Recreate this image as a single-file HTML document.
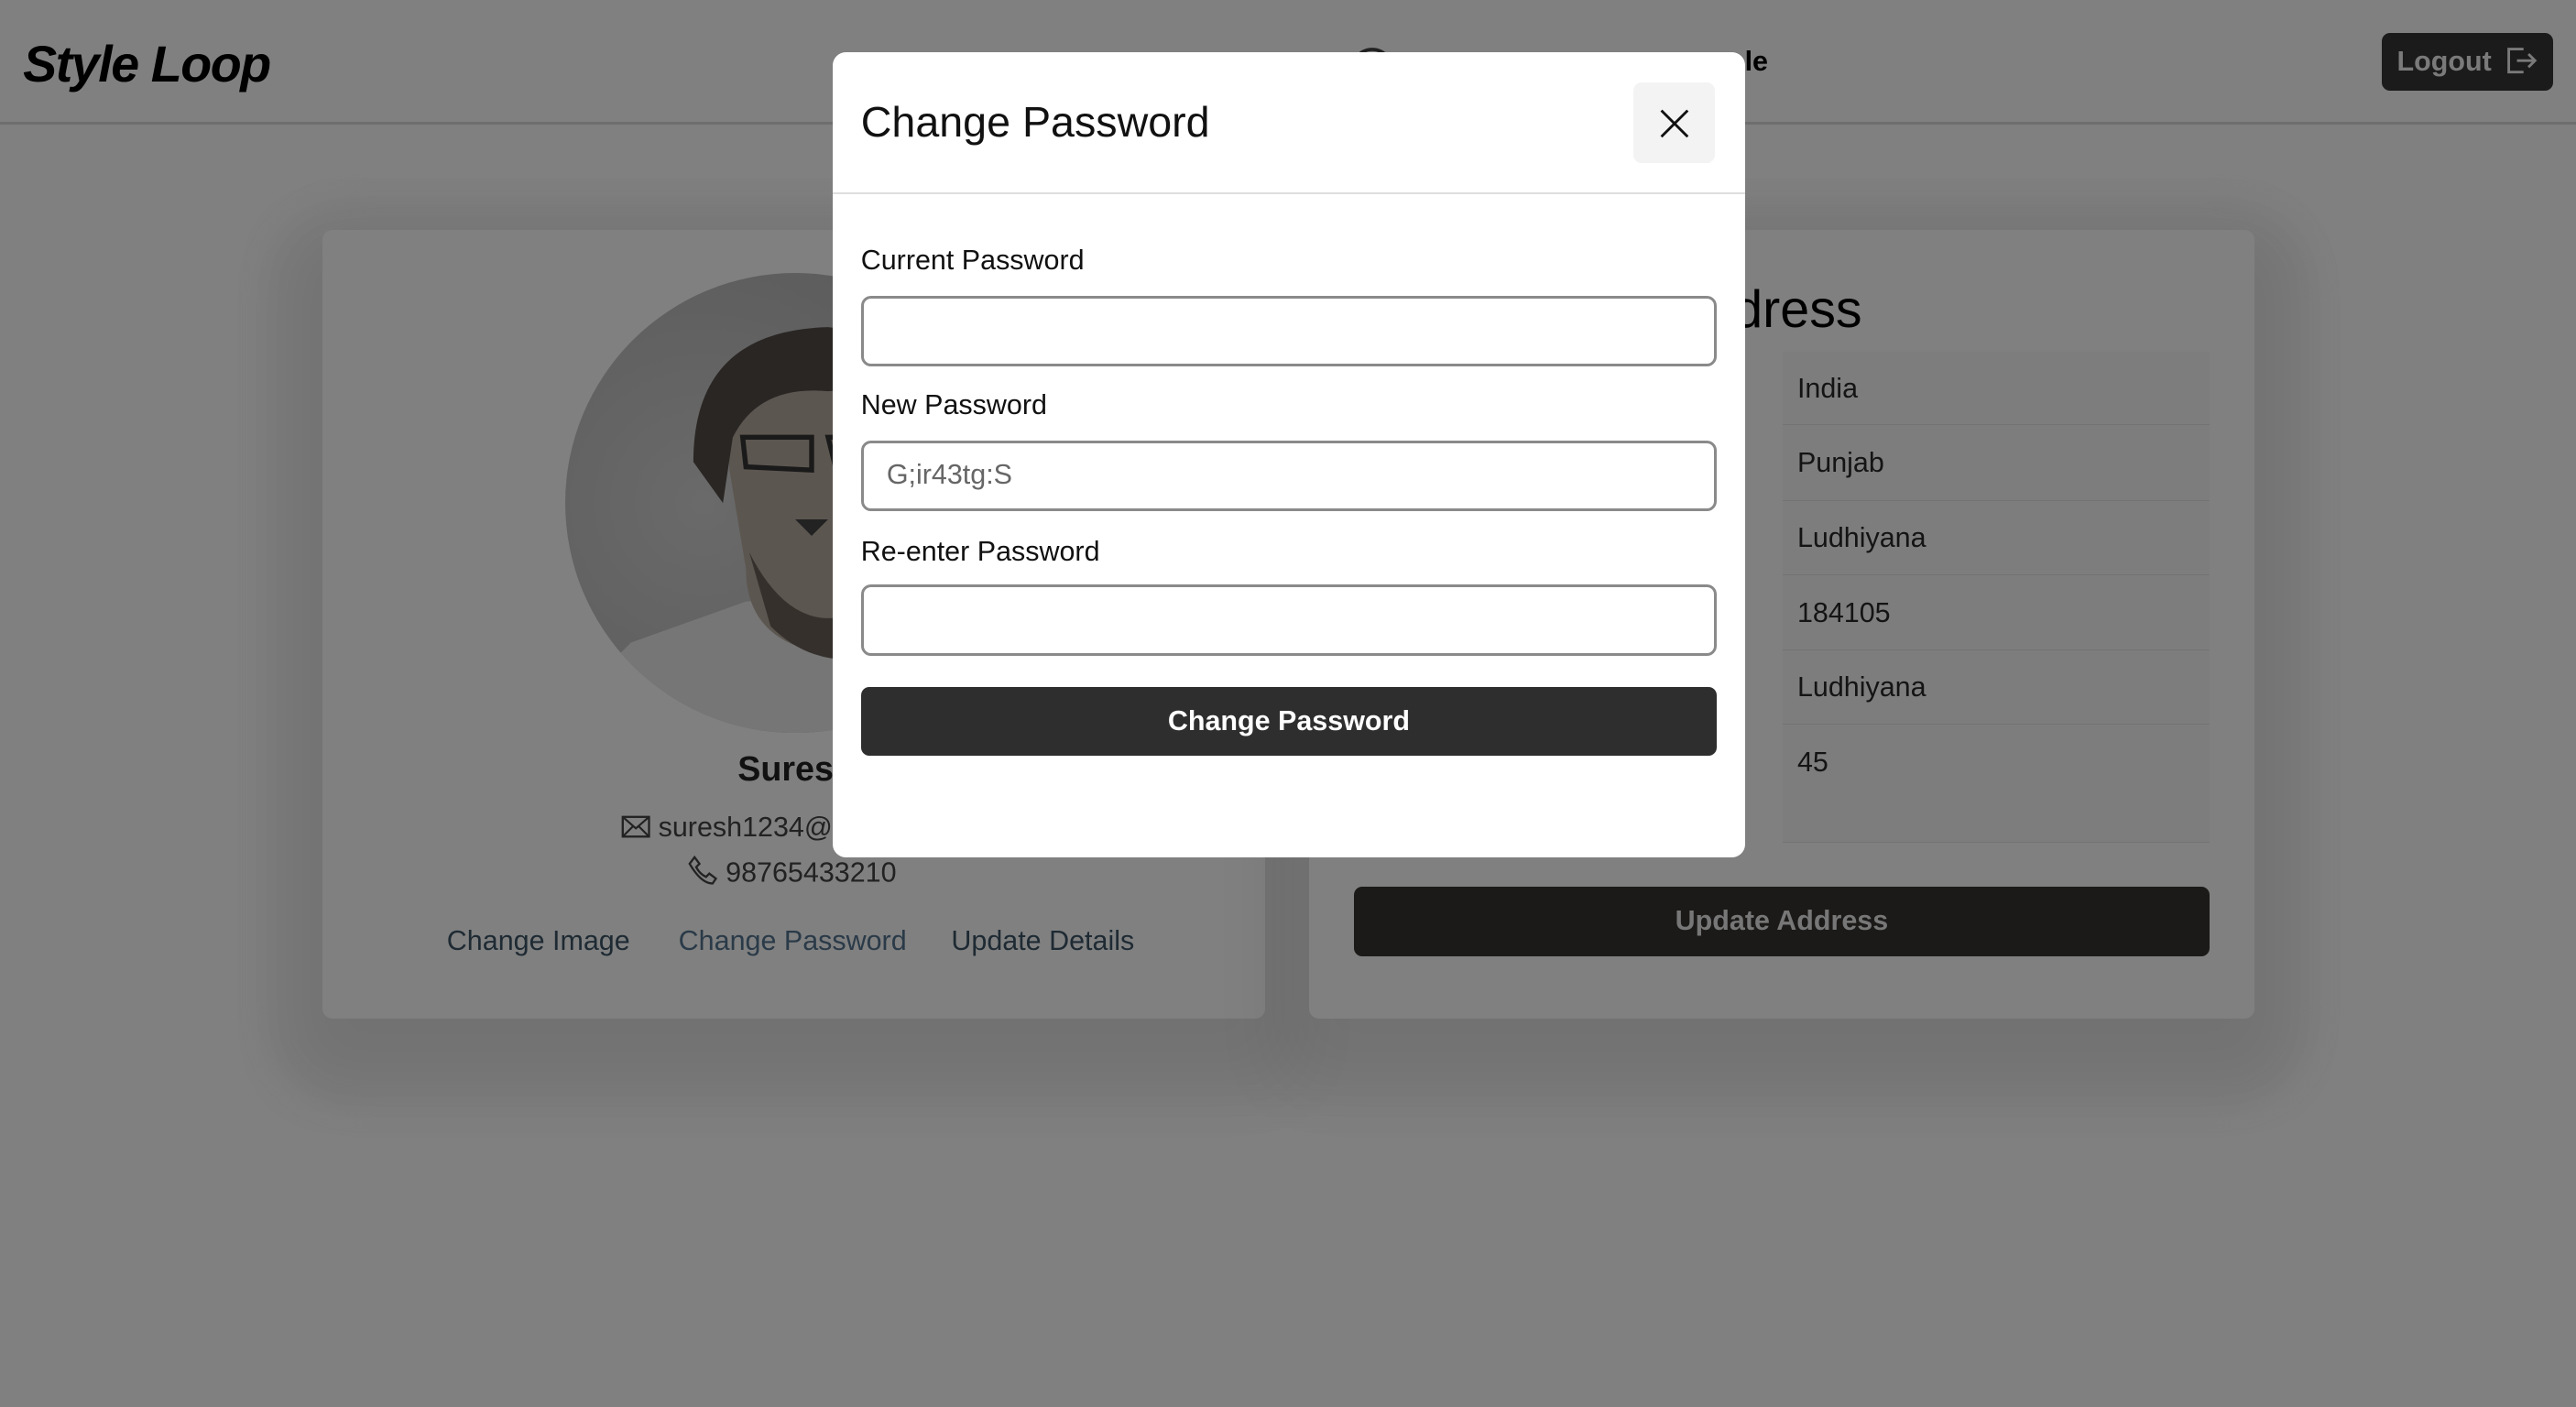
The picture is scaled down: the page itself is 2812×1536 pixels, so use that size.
<!DOCTYPE html>
<html><head><meta charset="utf-8">
<style>
html,body{margin:0;padding:0}
body{width:1568px;height:856px;zoom:1.7934;position:relative;overflow:hidden;background:#808080;font-family:"Liberation Sans",sans-serif;color:#000}
.abs{position:absolute}
.nav{left:0;top:0;width:1568px;height:74px;border-bottom:2px solid #6e6e6e;background:#808080}
.logo{left:14px;top:21px;font-size:31px;font-weight:bold;font-style:italic;letter-spacing:-0.8px;color:#000}
.logout{left:1450px;top:20px;width:104px;height:35px;background:#1b1b1b;border-radius:5px;color:#7a7a7a;font-weight:bold;font-size:17px;line-height:35px;box-sizing:border-box;padding-left:9px}
.card{background:#808080;border-radius:6px;box-shadow:0 20px 40px 20px rgba(0,0,0,0.08)}
.shadowblk{left:160px;top:120px;width:1250px;height:555px;border-radius:60px;background:#7c7c7c;filter:blur(6px)}
.row{position:absolute;left:1085px;width:260px;border-bottom:1px solid #737373;background:#7d7d7d;font-size:17px;color:#141414;box-sizing:border-box;padding-left:9px}
.modal{left:507px;top:32px;width:555px;height:490px;background:#fff;border-radius:8px}
.lbl{font-size:17px;color:#111;left:524px}
.inp{left:524px;width:521px;height:43px;border:2px solid #8a8a8a;border-radius:6px;box-sizing:border-box;background:#fff}
</style></head><body>
<div class="abs nav"></div>
<div class="abs logo">Style Loop</div>
<svg class="abs" style="left:820px;top:20px" width="30" height="30"><path d="M3 22 A12 12 0 0 1 27 22" fill="none" stroke="#222" stroke-width="2"/></svg>
<div class="abs" style="left:1062px;top:28px;font-size:17px;font-weight:bold">le</div>
<div class="abs logout">Logout <svg style="vertical-align:-3px;margin-left:4px" width="20" height="18" viewBox="0 0 20 18"><path d="M11 2H2v14h9M7 9h11M14 5l4 4-4 4" fill="none" stroke="#7a7a7a" stroke-width="1.6"/></svg></div>

<div class="abs shadowblk"></div>
<div class="abs card" style="left:196px;top:140px;width:574px;height:480px"></div>
<div class="abs card" style="left:797px;top:140px;width:575px;height:480px"></div>

<svg class="abs" style="left:344px;top:166px" width="280" height="280" viewBox="0 0 280 280">
<defs><clipPath id="c"><circle cx="140" cy="140" r="140"/></clipPath>
<radialGradient id="bg" cx="0.3" cy="0.5" r="0.7"><stop offset="0" stop-color="#6a6a6a"/><stop offset="1" stop-color="#5a5a5a"/></radialGradient></defs>
<g clip-path="url(#c)">
<rect width="280" height="280" fill="url(#bg)"/>
<path d="M0 265 L40 225 L110 200 L200 195 L280 210 L280 280 L0 280Z" fill="#767676"/>
<path d="M100 120 Q95 50 150 45 Q215 45 220 110 L215 180 Q190 235 150 230 Q110 220 110 180Z" fill="#5c5650"/>
<path d="M78 115 Q78 35 160 33 Q230 40 240 100 L222 92 Q200 68 160 72 Q118 68 102 100 L96 140Z" fill="#2a2624"/>
<path d="M108 100 L150 100 L150 120 L110 118Z M160 100 L220 100 L220 120 L165 120Z" fill="none" stroke="#1a1a1a" stroke-width="3"/>
<path d="M112 170 Q150 245 215 180 L215 225 Q160 250 125 215Z" fill="#36302c"/>
<path d="M140 150 L150 160 L160 150 Z" fill="#222"/>
</g></svg>

<div class="abs" style="left:449px;top:456px;font-size:21px;font-weight:bold;color:#111">Suresh Kumar</div>
<div class="abs" style="left:378px;top:494px;font-size:17px;color:#222"><svg width="18" height="14" style="vertical-align:-1px" viewBox="0 0 18 14"><rect x="1" y="1" width="16" height="12" fill="none" stroke="#222" stroke-width="1.3"/><path d="M1 1l8 7 8-7M1 13l6-6M17 13l-6-6" fill="none" stroke="#222" stroke-width="1.2"/></svg> suresh1234@gmail.com</div>
<div class="abs" style="left:419px;top:521px;font-size:17px;color:#222"><svg width="18" height="18" style="vertical-align:-2px" viewBox="0 0 18 18"><path d="M4 1l3 4-2 2q2 4 6 6l2-2 4 3-2 3Q8 17 1 5Z" fill="none" stroke="#222" stroke-width="1.3"/></svg> 98765433210</div>
<div class="abs" style="left:272px;top:563px;font-size:17px;color:#1e2a33">Change Image</div>
<div class="abs" style="left:413px;top:563px;font-size:17px;color:#2a3a48">Change Password</div>
<div class="abs" style="left:579px;top:563px;font-size:17px;color:#1e2a33">Update Details</div>

<div class="abs" style="left:1016px;top:170px;font-size:32px;color:#000">Address</div>
<div class="row" style="top:214px;height:45px;line-height:45px">India</div>
<div class="row" style="top:259px;height:46px;line-height:46px">Punjab</div>
<div class="row" style="top:305px;height:45px;line-height:45px">Ludhiyana</div>
<div class="row" style="top:350px;height:46px;line-height:46px">184105</div>
<div class="row" style="top:396px;height:45px;line-height:45px">Ludhiyana</div>
<div class="row" style="top:441px;height:72px;line-height:46px">45</div>
<div class="abs" style="left:824px;top:540px;width:521px;height:42px;background:#1b1a18;border-radius:5px;color:#777;font-weight:bold;font-size:17px;text-align:center;line-height:42px">Update Address</div>

<div class="abs modal"></div>
<div class="abs" style="left:507px;top:117px;width:555px;height:1px;background:#dedede"></div>
<div class="abs" style="left:524px;top:59px;font-size:26px;color:#111">Change Password</div>
<div class="abs" style="left:994px;top:50px;width:50px;height:49px;background:#f3f3f3;border-radius:5px"></div>
<svg class="abs" style="left:1009px;top:65px" width="20" height="20" viewBox="0 0 20 20"><path d="M2 2L18 18M18 2L2 18" stroke="#111" stroke-width="1.6"/></svg>
<div class="abs lbl" style="top:149px">Current Password</div>
<div class="abs inp" style="top:180px"></div>
<div class="abs lbl" style="top:237px">New Password</div>
<div class="abs inp" style="top:268px;font-size:17px;color:#666;line-height:39px;padding-left:14px">G;ir43tg:S</div>
<div class="abs lbl" style="top:326px">Re-enter Password</div>
<div class="abs inp" style="top:356px"></div>
<div class="abs" style="left:524px;top:418px;width:521px;height:42px;background:#2e2e2e;border-radius:5px;color:#fff;font-weight:bold;font-size:17px;text-align:center;line-height:42px">Change Password</div>
</body></html>
